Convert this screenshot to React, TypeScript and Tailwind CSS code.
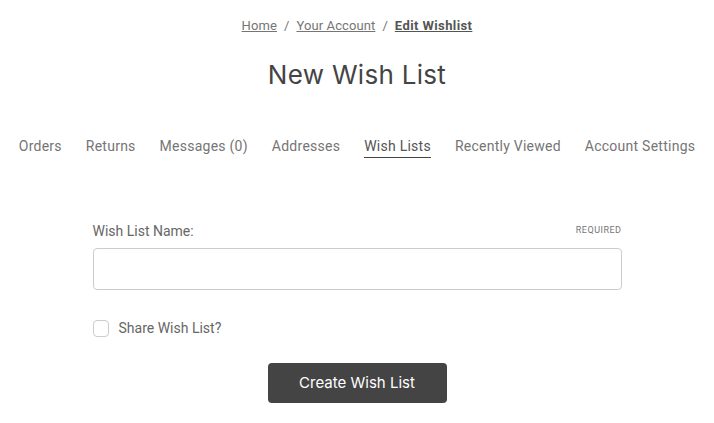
import React from "react";

export default function App() {
  const nav = ["Orders", "Returns", "Messages (0)", "Addresses", "Wish Lists", "Recently Viewed", "Account Settings"];
  return (
    <div className="w-[714px] h-[423px] bg-white flex flex-col items-center text-[#545454] font-['Roboto',sans-serif]">
      <div className="mt-[18px] flex items-center gap-[7px] text-[13px] leading-[16px] text-[#757575] tracking-[0.1px]">
        <span className="underline">Home</span>
        <span>/</span>
        <span className="underline">Your Account</span>
        <span>/</span>
        <span className="underline font-bold text-[#545454] tracking-[0.4px]">Edit Wishlist</span>
      </div>
      <h1 className="mt-[25px] text-[26px] leading-[32px] font-['Inter',sans-serif] font-normal text-[#444] tracking-[0.3px]">New Wish List</h1>
      <nav className="mt-[46px] flex gap-[24px] text-[14px] leading-[18px] text-[#757575] tracking-[0.25px]">
        {nav.map((n) => (
          <span key={n} className={n === "Wish Lists" ? "text-[#545454] border-b border-[#444] pb-[2px]" : "pb-[3px]"}>{n}</span>
        ))}
      </nav>
      <form className="mt-[64px] w-[529px] flex flex-col">
        <div className="flex items-center justify-between">
          <label className="text-[14px] leading-[18px] text-[#666]">Wish List Name:</label>
          <span className="text-[9px] tracking-[0.5px] text-[#757575]">REQUIRED</span>
        </div>
        <input className="mt-[8px] h-[42px] rounded-[4px] border border-[#ccc] outline-none" />
        <label className="mt-[28px] flex items-center gap-[10px] text-[14px] text-[#666]">
          <span className="w-[16px] h-[17px] rounded-[4px] border border-[#ccc] bg-white" />
          Share Wish List?
        </label>
        <div className="mt-[24px] flex justify-center">
          <button type="button" className="w-[179px] h-[40px] rounded-[4px] bg-[#444] text-white text-[15px] font-['Inter',sans-serif] font-normal">Create Wish List</button>
        </div>
      </form>
    </div>
  );
}
